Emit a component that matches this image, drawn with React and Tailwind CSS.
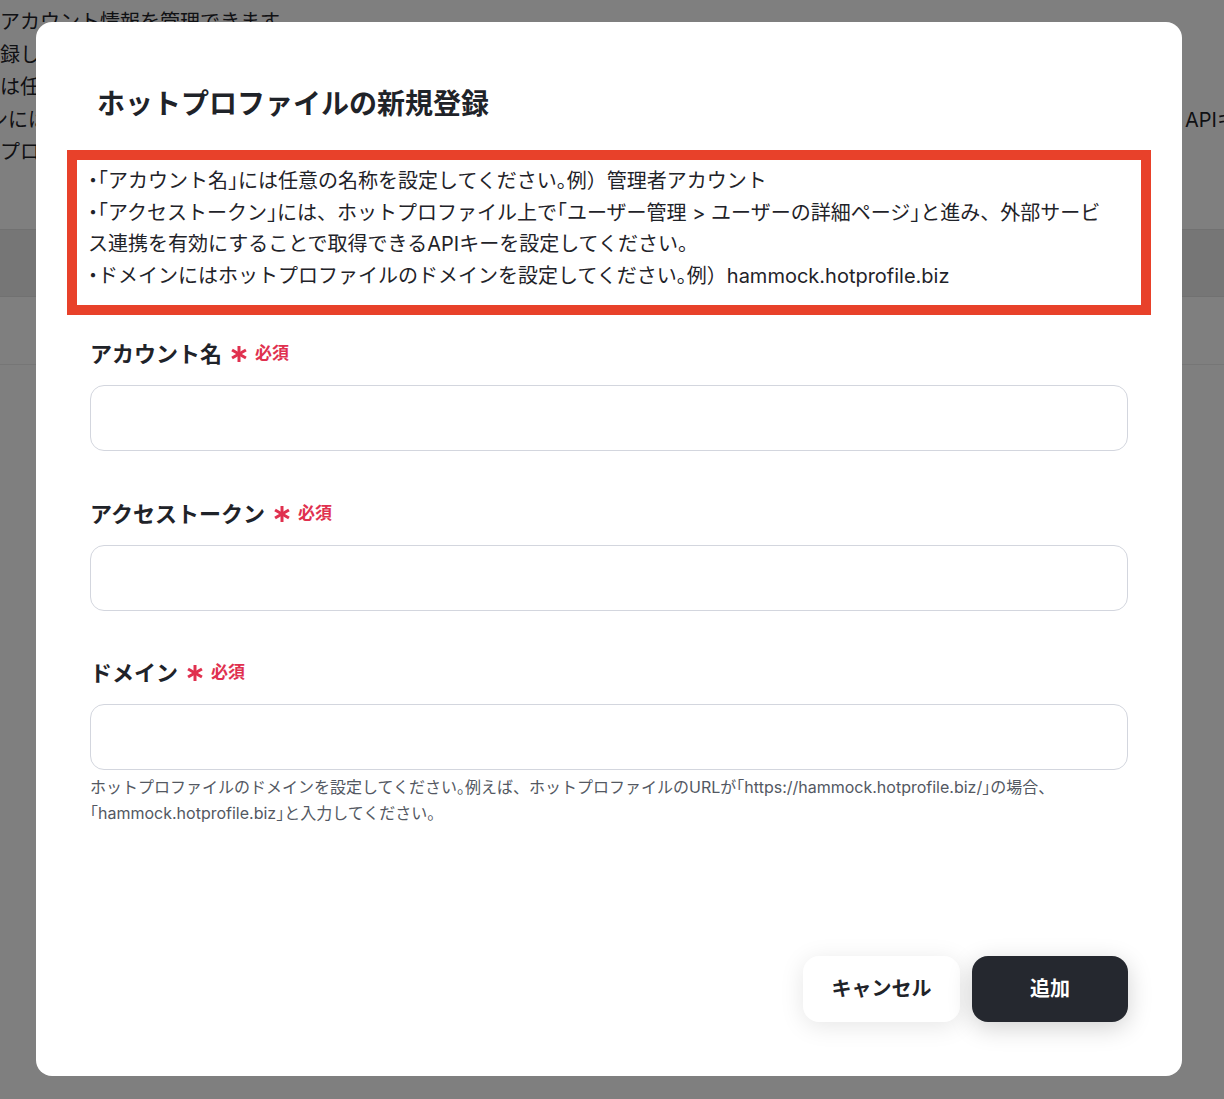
// 約物（「」。・）だけ半角幅で詰める
const PUNCT = /([「」。・])/;

function J({ text }) {
  return text.split(PUNCT).map((s, i) =>
    s.length === 1 && PUNCT.test(s) ? (
      <span key={i} className="[font-feature-settings:'halt']">
        {s}
      </span>
    ) : (
      s
    )
  );
}

function RequiredMark() {
  return (
    <span className="ml-[8px] flex items-center">
      <svg width="18" height="18" viewBox="0 0 18 18" className="text-[#e0314f]">
        <g stroke="currentColor" strokeWidth="3" strokeLinecap="butt">
          <line x1="9" y1="1" x2="9" y2="17" />
          <line x1="2.07" y1="5" x2="15.93" y2="13" />
          <line x1="2.07" y1="13" x2="15.93" y2="5" />
        </g>
      </svg>
      <span className="ml-[7px] text-[17px] font-semibold text-[#e0314f]">必須</span>
    </span>
  );
}

const fields = [
  { label: 'アカウント名', gap: 'mt-[23px]' },
  { label: 'アクセストークン', gap: 'mt-[47px]' },
  {
    label: 'ドメイン',
    gap: 'mt-[46px]',
    help: [
      'ホットプロファイルのドメインを設定してください。例えば、ホットプロファイルのURLが「https://hammock.hotprofile.biz/」の場合、',
      '「hammock.hotprofile.biz」と入力してください。',
    ],
  },
];

function Field({ label, help, gap }) {
  return (
    <div className={gap}>
      <div className="flex items-center h-[32px]">
        <span className="text-[22px] font-bold text-[#1f2329] leading-[32px]">{label}</span>
        <RequiredMark />
      </div>
      <input
        type="text"
        className="mt-[15px] block w-full h-[66px] rounded-[14px] border border-[#d3d6de] bg-white px-4 text-[18px] outline-none"
      />
      {help && (
        <p className="mt-[4px] text-[16px] leading-[26px] text-[#535862]">
          <J text={help[0]} />
          <br />
          <J text={help[1]} />
        </p>
      )}
    </div>
  );
}

export default function App() {
  return (
    <div className="relative h-[1099px] overflow-hidden bg-white font-['Inter','Noto_Sans_CJK_JP',sans-serif] text-[#1f2329]">
      {/* 背景のページ */}
      <div className="pt-[6px] text-[20px] leading-[32.5px] whitespace-nowrap">
        <div>アカウント情報を管理できます。</div>
        <div>録したアカウントはフローボットで利用できます。</div>
        <div>は任意の名称を設定してください。</div>
        <div className="grid grid-cols-[1185px_auto]">
          <span className="-ml-[12px]">ンにはホットプロファイル上で取得できる</span>
          <span>APIキー</span>
        </div>
        <div>プロファイルのドメインを設定してください。</div>
      </div>
      <div className="mt-[60px] h-[68px] bg-[#ececec] border-y border-[#e2e2e2]" />
      <div className="h-[68px] border-b border-[#ececec]" />

      {/* モーダル */}
      <div className="absolute inset-0 bg-black/50 pt-[22px] pl-[36px]">
        <div className="flex flex-col w-[1146px] h-[1054px] rounded-[16px] bg-white px-[54px] pb-[54px] pt-[62px]">
          <h2 className="pl-[7px] text-[28px] font-bold leading-[40px] text-[#1f2329]">
            ホットプロファイルの新規登録
          </h2>

          <div className="-mx-[23px] mt-[26px] border-[10px] border-[#e8412a] px-[11px] pt-[6px] pb-[13px] text-[20px] leading-[31.5px] text-[#1f2329]">
            <p>
              <J text="・「アカウント名」には任意の名称を設定してください。例）管理者アカウント" />
            </p>
            <p>
              <J text="・「アクセストークン」には、ホットプロファイル上で「ユーザー管理 > ユーザーの詳細ページ」と進み、外部サービ" />
              <br />
              <J text="ス連携を有効にすることで取得できるAPIキーを設定してください。" />
            </p>
            <p>
              <J text="・ドメインにはホットプロファイルのドメインを設定してください。例）hammock.hotprofile.biz" />
            </p>
          </div>

          {fields.map((f) => (
            <Field key={f.label} label={f.label} help={f.help} gap={f.gap} />
          ))}

          <div className="mt-auto flex justify-end gap-[12px]">
            <button className="w-[157px] h-[66px] rounded-[16px] bg-white text-[20px] font-bold text-[#1f2329] shadow-[0_4px_24px_rgba(0,0,0,0.10)]">
              キャンセル
            </button>
            <button className="w-[156px] h-[66px] rounded-[16px] bg-[#25282f] text-[20px] font-bold text-white shadow-[0_6px_24px_rgba(0,0,0,0.18)]">
              追加
            </button>
          </div>
        </div>
      </div>
    </div>
  );
}
